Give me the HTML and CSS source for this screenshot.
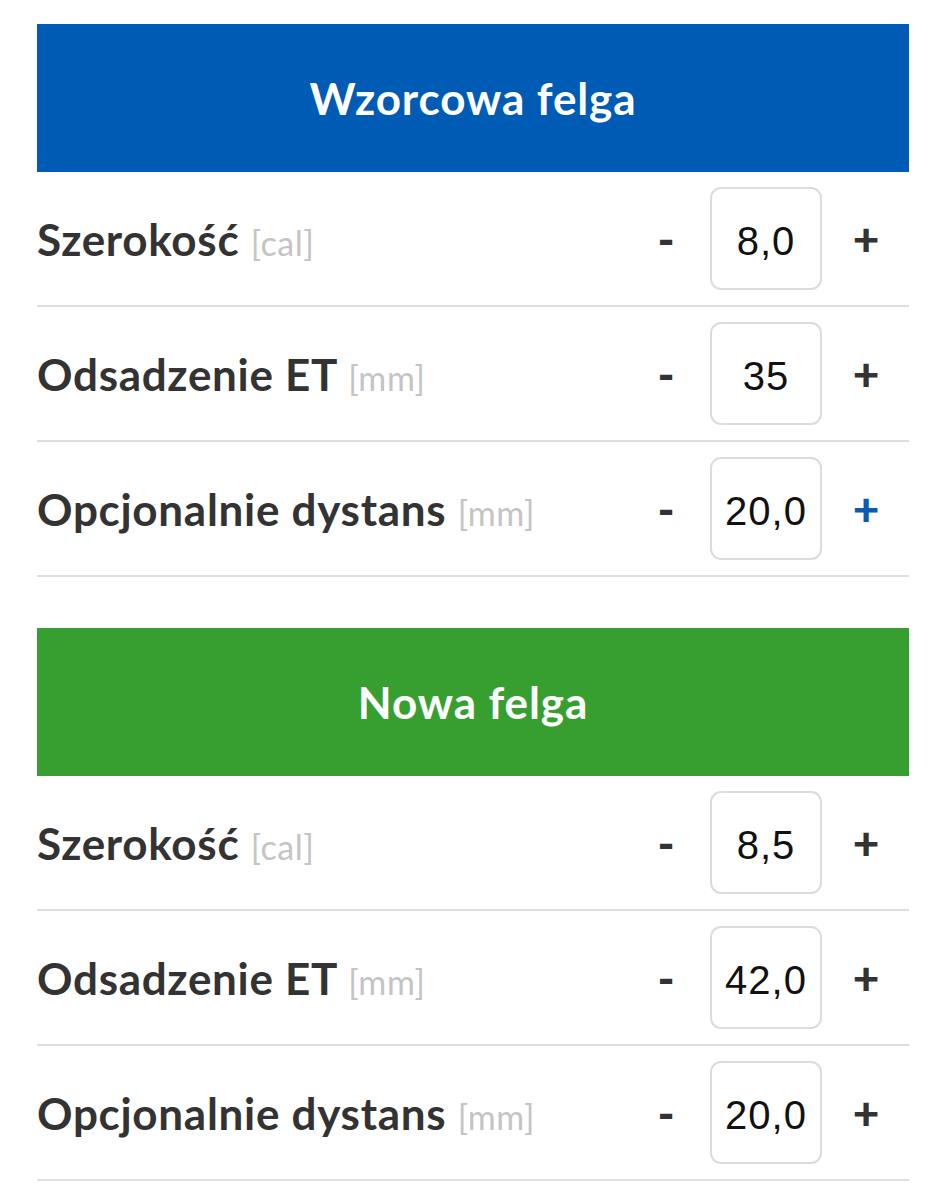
FILE: index.html
```html
<!DOCTYPE html>
<html lang="pl">
<head>
    <meta charset="UTF-8">
    <meta name="viewport" content="width=device-width, initial-scale=1.0">
    <title>Kalkulator felg</title>
    <link rel="stylesheet" href="styles.css">
</head>
<body>
    <div class="calc">
        <section class="panel">
            <h2 class="panel-title blue">Wzorcowa felga</h2>
            <div class="row">
                <span class="label">Szerokość <span class="unit">[cal]</span></span>
                <div class="stepper">
                    <button class="btn minus">-</button>
                    <input class="value" type="text" value="8,0">
                    <button class="btn plus">+</button>
                </div>
            </div>
            <div class="row">
                <span class="label">Odsadzenie ET <span class="unit">[mm]</span></span>
                <div class="stepper">
                    <button class="btn minus">-</button>
                    <input class="value" type="text" value="35">
                    <button class="btn plus">+</button>
                </div>
            </div>
            <div class="row">
                <span class="label">Opcjonalnie dystans <span class="unit">[mm]</span></span>
                <div class="stepper">
                    <button class="btn minus">-</button>
                    <input class="value" type="text" value="20,0">
                    <button class="btn plus active">+</button>
                </div>
            </div>
        </section>

        <section class="panel">
            <h2 class="panel-title green">Nowa felga</h2>
            <div class="row">
                <span class="label">Szerokość <span class="unit">[cal]</span></span>
                <div class="stepper">
                    <button class="btn minus">-</button>
                    <input class="value" type="text" value="8,5">
                    <button class="btn plus">+</button>
                </div>
            </div>
            <div class="row">
                <span class="label">Odsadzenie ET <span class="unit">[mm]</span></span>
                <div class="stepper">
                    <button class="btn minus">-</button>
                    <input class="value" type="text" value="42,0">
                    <button class="btn plus">+</button>
                </div>
            </div>
            <div class="row">
                <span class="label">Opcjonalnie dystans <span class="unit">[mm]</span></span>
                <div class="stepper">
                    <button class="btn minus">-</button>
                    <input class="value" type="text" value="20,0">
                    <button class="btn plus">+</button>
                </div>
            </div>
        </section>
    </div>
</body>
</html>
```

FILE: styles.css
```css
body {
    margin: 0;
    background-color: #fff;
    font-family: Lato, "Liberation Sans", sans-serif;
}

.calc {
    padding: 24px 37px 0;
}

.panel {
    margin-bottom: 51px;
}

.panel-title {
    margin: 0;
    height: 148px;
    display: flex;
    align-items: center;
    justify-content: center;
    color: #fff;
    font-size: 44px;
    font-weight: 700;
    letter-spacing: 0.9px;
}

.blue {
    background-color: #005bb5;
}

.green {
    background-color: #369f2f;
}

.row {
    height: 133px;
    display: flex;
    align-items: center;
    justify-content: space-between;
    border-bottom: 2px solid #dedede;
}

.label {
    font-size: 44px;
    font-weight: 700;
    color: #333;
    letter-spacing: 0.7px;
}

.unit {
    font-size: 34px;
    font-weight: 400;
    color: #c4c4c4;
    letter-spacing: 0.6px;
}

.stepper {
    display: flex;
    align-items: center;
    gap: 14px;
    padding-right: 13px;
}

.btn {
    width: 60px;
    padding: 0;
    border: none;
    background: none;
    font-family: Lato, sans-serif;
    font-weight: 900;
    font-size: 46px;
    color: #333;
}

.btn.active {
    color: #0a5bb5;
}

.value {
    box-sizing: border-box;
    width: 112px;
    height: 103px;
    border: 2px solid #dcdcdc;
    border-radius: 11px;
    text-align: center;
    font-family: "Liberation Sans", Arial, sans-serif;
    font-size: 40px;
    letter-spacing: 1px;
    color: #111;
    padding: 6px 0 0;
}
```
